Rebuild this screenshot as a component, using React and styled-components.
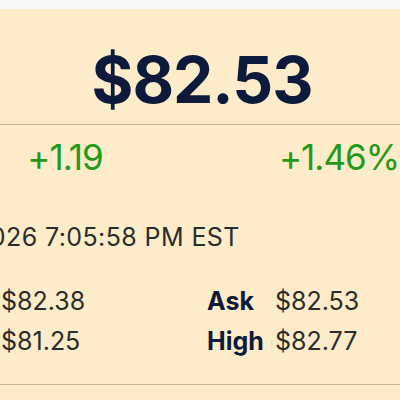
import React from "react";
import styled, { createGlobalStyle } from "styled-components";

const GlobalStyle = createGlobalStyle`
  html, body {
    margin: 0;
    padding: 0;
    background: #f8f8f8;
    overflow: hidden;
  }
  body {
    font-family: "Inter", "Liberation Sans", sans-serif;
  }
`;

const Page = styled.div`
  padding-top: 9px;
  width: 400px;
  height: 400px;
  overflow: hidden;
`;

const Panel = styled.div`
  background: #fdecc9;
  width: 548px;
  margin-left: -72px;
  height: 391px;
`;

const PriceBox = styled.div`
  text-align: center;
  padding-top: 39px;
  box-sizing: border-box;
  height: 116px;
  border-bottom: 1px solid #cdb085;
`;

const Price = styled.div`
  font-size: 64px;
  font-weight: 700;
  color: #0e1a3c;
  line-height: 1;
  letter-spacing: -1px;
`;

const Columns = styled.div`
  display: grid;
  grid-template-columns: 1fr 1fr;
`;

const Change = styled.div`
  text-align: center;
  color: #23991a;
  font-size: 35px;
  line-height: 1;
  letter-spacing: -1px;
  padding-top: 15px;
`;

const Stamp = styled.div`
  font-size: 25px;
  color: #2c2c2c;
  padding: 50px 0 0 1px;
  line-height: 1;
  letter-spacing: 0.4px;
`;

const Stats = styled.div`
  display: grid;
  grid-template-columns: 1fr 1fr;
  row-gap: 15px;
  padding-top: 39px;
  padding-bottom: 30px;
  border-bottom: 1px solid #cdb085;
`;

const Stat = styled.div`
  display: flex;
  align-items: baseline;
  padding-left: 5px;
  font-size: 25px;
  line-height: 1;
`;

const Label = styled.span`
  width: 68px;
  font-weight: 700;
  color: #0e1a3c;
`;

const Value = styled.span`
  color: #2c2c2c;
`;

const stats = [
  ["Bid", "$82.38"],
  ["Ask", "$82.53"],
  ["Low", "$81.25"],
  ["High", "$82.77"],
];

export default function App() {
  return (
    <Page>
      <GlobalStyle />
      <Panel>
        <PriceBox>
          <Price>$82.53</Price>
        </PriceBox>
        <Columns>
          <Change>+1.19</Change>
          <Change>+1.46%</Change>
        </Columns>
        <Stamp>1/3/2026 7:05:58 PM EST</Stamp>
        <Stats>
          {stats.map(([label, value]) => (
            <Stat key={label}>
              <Label>{label}</Label>
              <Value>{value}</Value>
            </Stat>
          ))}
        </Stats>
      </Panel>
    </Page>
  );
}
